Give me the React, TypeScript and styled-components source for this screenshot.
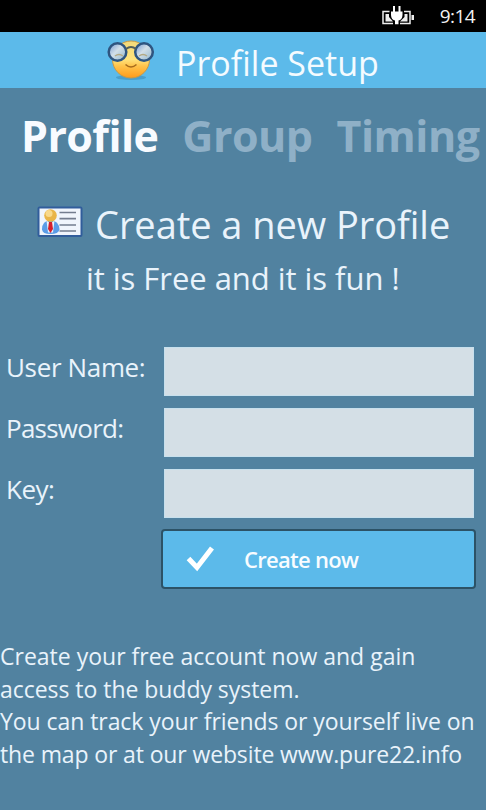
import React from 'react';
import styled, { createGlobalStyle } from 'styled-components';

const GlobalStyle = createGlobalStyle`
  * {
    box-sizing: border-box;
  }

  body {
    margin: 0;
    overflow: hidden;
    background: #5182a0;
  }
`;

interface TextProps {
  $size: number;
  $spacing?: number;
}

const Screen = styled.div`
  display: flex;
  flex-direction: column;
  width: 486px;
  height: 810px;
  overflow: hidden;
  background: #5182a0;
  color: #e9f3fb;
  font-family: 'Open Sans', 'Noto Sans', sans-serif;
  white-space: nowrap;
`;

const StatusBar = styled.div`
  display: flex;
  flex: none;
  align-items: center;
  justify-content: flex-end;
  gap: 26px;
  height: 32px;
  padding-right: 11px;
  background: #000;
  color: #f2f2f2;
`;

const Clock = styled.span`
  font-size: 19px;
  line-height: 32px;
  letter-spacing: -0.6px;
`;

const TitleBar = styled.header`
  display: flex;
  flex: none;
  align-items: center;
  gap: 21px;
  height: 56px;
  padding-left: 107px;
  background: #5cbaea;
`;

const Title = styled.h1<TextProps>`
  margin: 6px 0 0;
  color: #f4fbff;
  font-size: ${(props) => props.$size}px;
  font-weight: 400;
  line-height: 50px;
  letter-spacing: ${(props) => props.$spacing}px;
`;

const Tabs = styled.nav`
  display: flex;
  flex: none;
  gap: 24px;
  height: 98px;
  padding: 18px 0 0 21px;
`;

const Tab = styled.span<{ $active?: boolean; $spacing: number }>`
  color: ${(props) => (props.$active ? '#f8fbff' : '#8fb0c7')};
  font-size: 43px;
  font-weight: 700;
  line-height: 60px;
  letter-spacing: ${(props) => props.$spacing}px;
`;

const Heading = styled.div`
  display: flex;
  flex: none;
  height: 75px;
  padding-left: 36px;
  gap: 12px;

  svg {
    margin-top: 19px;
  }
`;

const HeadingLine = styled.h2<TextProps>`
  margin: 10px 0 0;
  font-size: ${(props) => props.$size}px;
  font-weight: 400;
  line-height: 56px;
  letter-spacing: ${(props) => props.$spacing}px;
`;

const SubHeading = styled.p<TextProps>`
  flex: none;
  height: 86px;
  margin: 0;
  padding-left: 86px;
  font-size: ${(props) => props.$size}px;
  line-height: 34px;
  letter-spacing: ${(props) => props.$spacing}px;
`;

const Form = styled.form`
  display: grid;
  flex: none;
  grid-template-columns: 158px 310px;
  grid-auto-rows: 49px;
  row-gap: 12px;
  padding-left: 6px;
`;

const Label = styled.label<{ $spacing: number }>`
  font-size: 26px;
  line-height: 40px;
  letter-spacing: ${(props) => props.$spacing}px;
`;

const Field = styled.input`
  width: 310px;
  height: 49px;
  border: 1px solid #c7e0ed;
  border-radius: 0;
  background: #d4dfe6;
`;

const CreateButton = styled.button`
  display: flex;
  flex: none;
  align-items: center;
  gap: 28px;
  width: 315px;
  height: 60px;
  margin: 11px 0 0 161px;
  padding: 0 0 0 23px;
  border: 2px solid #2c5266;
  border-radius: 4px;
  background: #5cbaea;
  color: #f8fcff;
  font-family: inherit;
  font-size: 22px;
  font-weight: 600;
  line-height: 30px;
  letter-spacing: -0.7px;
`;

const Notes = styled.div`
  margin-top: 51px;
`;

const NoteLine = styled.p<{ $spacing: number }>`
  margin: 0;
  font-size: 23px;
  line-height: 32.5px;
  letter-spacing: ${(props) => props.$spacing}px;
`;

const BatteryIcon = () => (
  <svg width="33" height="20" viewBox="0 0 33 20" fill="none">
    <path d="M8.500 5.500H2v12h10M23 5.500h6v12H19" stroke="#eee" strokeWidth="1.500" />
    <path d="M4.500 8H8v3l4 4.500H4.500zM23.500 8h3v7.500H19l4.500-4.500z" fill="#eee" />
    <path d="M30.500 9H33v5h-2.500z" fill="#eee" />
    <path
      d="M10 5.500h11.500v3.500c0 3.500-2 5-4 5.500v3.700H14v-3.700c-2-.5-4-2-4-5.500z"
      fill="#fff"
    />
    <path d="M13 0v6M18.500 0v6" stroke="#fff" strokeWidth="2" />
  </svg>
);

const SmileyIcon = () => (
  <svg width="48" height="42" viewBox="0 0 48 42">
    <defs>
      <linearGradient id="face" x1="0" y1="0" x2="0" y2="1">
        <stop offset="0" stopColor="#f3da7a" />
        <stop offset="0.500" stopColor="#ffe27a" />
        <stop offset="0.680" stopColor="#ffc34a" />
        <stop offset="1" stopColor="#ff9a1a" />
      </linearGradient>
      <linearGradient id="lens" x1="0" y1="0" x2="1" y2="1">
        <stop offset="0" stopColor="#6f96d2" />
        <stop offset="0.450" stopColor="#d3dfe8" />
        <stop offset="1" stopColor="#8fb5cb" />
      </linearGradient>
    </defs>
    <ellipse cx="24" cy="38.500" rx="15" ry="2.500" fill="#3e8eb9" opacity="0.600" />
    <circle cx="24" cy="20.500" r="18.500" fill="url(#face)" stroke="#c99a45" />
    <path d="M18.500 25.500q5.500 5 11 0" fill="none" stroke="#a76c1c" strokeWidth="1.500" />
    <circle cx="10.500" cy="13" r="8.800" fill="url(#lens)" stroke="#2f5580" strokeWidth="2.500" />
    <circle cx="37" cy="13" r="8.800" fill="url(#lens)" stroke="#2f5580" strokeWidth="2.500" />
    <path d="M19 10q5-4 10 0" fill="none" stroke="#53605d" strokeWidth="2" />
    <path d="M8 17q4-3 8 0M32 17q4-3 8 0" fill="none" stroke="#b4a985" strokeWidth="1.500" />
  </svg>
);

const CardIcon = () => (
  <svg width="47" height="33" viewBox="0 0 47 33">
    <rect x="2.500" y="2.500" width="43" height="28.500" rx="1" fill="#f0f5fc" stroke="#315d9b" strokeWidth="2" />
    <path d="M23.500 7.500H40M23.500 13.700H40M23.500 20H40M23.500 26H40" stroke="#737d8f" strokeWidth="1.700" />
    <path d="M6 24.500q0-9 8.500-9t9 9q-1 4.500-9 4.500T6 24.500z" fill="#5a9ce7" />
    <path d="M10.500 15.500l4 3 4-3-1.500 12h-5z" fill="#e9f3ff" />
    <path d="M13 17h3l1 7-2.500 4-2.500-4z" fill="#d51f2c" />
    <circle cx="14.500" cy="10.500" r="6.300" fill="#e9b548" />
    <circle cx="13" cy="8.500" r="3.500" fill="#f8d98b" />
  </svg>
);

const CheckIcon = () => (
  <svg width="30" height="26" viewBox="0 0 30 26">
    <path d="M2.500 12.500l8.500 9L26 2" fill="none" stroke="#fff" strokeWidth="5" />
  </svg>
);

const tabs = [
  { title: 'Profile', spacing: -0.6 },
  { title: 'Group', spacing: -0.5 },
  { title: 'Timing', spacing: -0.5 },
];

const fields = [
  { name: 'username', label: 'User Name:', spacing: -0.35 },
  { name: 'password', label: 'Password:', spacing: -0.75 },
  { name: 'key', label: 'Key:', spacing: -0.5 },
];

const notes = [
  { text: 'Create your free account now and gain', spacing: 0 },
  { text: 'access to the buddy system.', spacing: -0.04 },
  { text: 'You can track your friends or yourself live on', spacing: -0.06 },
  { text: 'the map or at our website www.pure22.info', spacing: -0.13 },
];

export default function App() {
  return (
    <Screen>
      <GlobalStyle />
      <StatusBar>
        <BatteryIcon />
        <Clock>9:14</Clock>
      </StatusBar>
      <TitleBar>
        <SmileyIcon />
        <Title $size={34} $spacing={0}>Profile Setup</Title>
      </TitleBar>
      <Tabs>
        {tabs.map(({ title, spacing }, index) => (
          <Tab key={title} $active={index === 0} $spacing={spacing}>{title}</Tab>
        ))}
      </Tabs>
      <Heading>
        <CardIcon />
        <HeadingLine $size={38} $spacing={-0.05}>Create a new Profile</HeadingLine>
      </Heading>
      <SubHeading $size={31} $spacing={-0.04}>it is Free and it is fun !</SubHeading>
      <Form>
        {fields.map(({ name, label, spacing }) => (
          <React.Fragment key={name}>
            <Label htmlFor={name} $spacing={spacing}>{label}</Label>
            <Field id={name} />
          </React.Fragment>
        ))}
      </Form>
      <CreateButton type="button">
        <CheckIcon />
        Create now
      </CreateButton>
      <Notes>
        {notes.map(({ text, spacing }) => (
          <NoteLine key={text} $spacing={spacing}>{text}</NoteLine>
        ))}
      </Notes>
    </Screen>
  );
}
